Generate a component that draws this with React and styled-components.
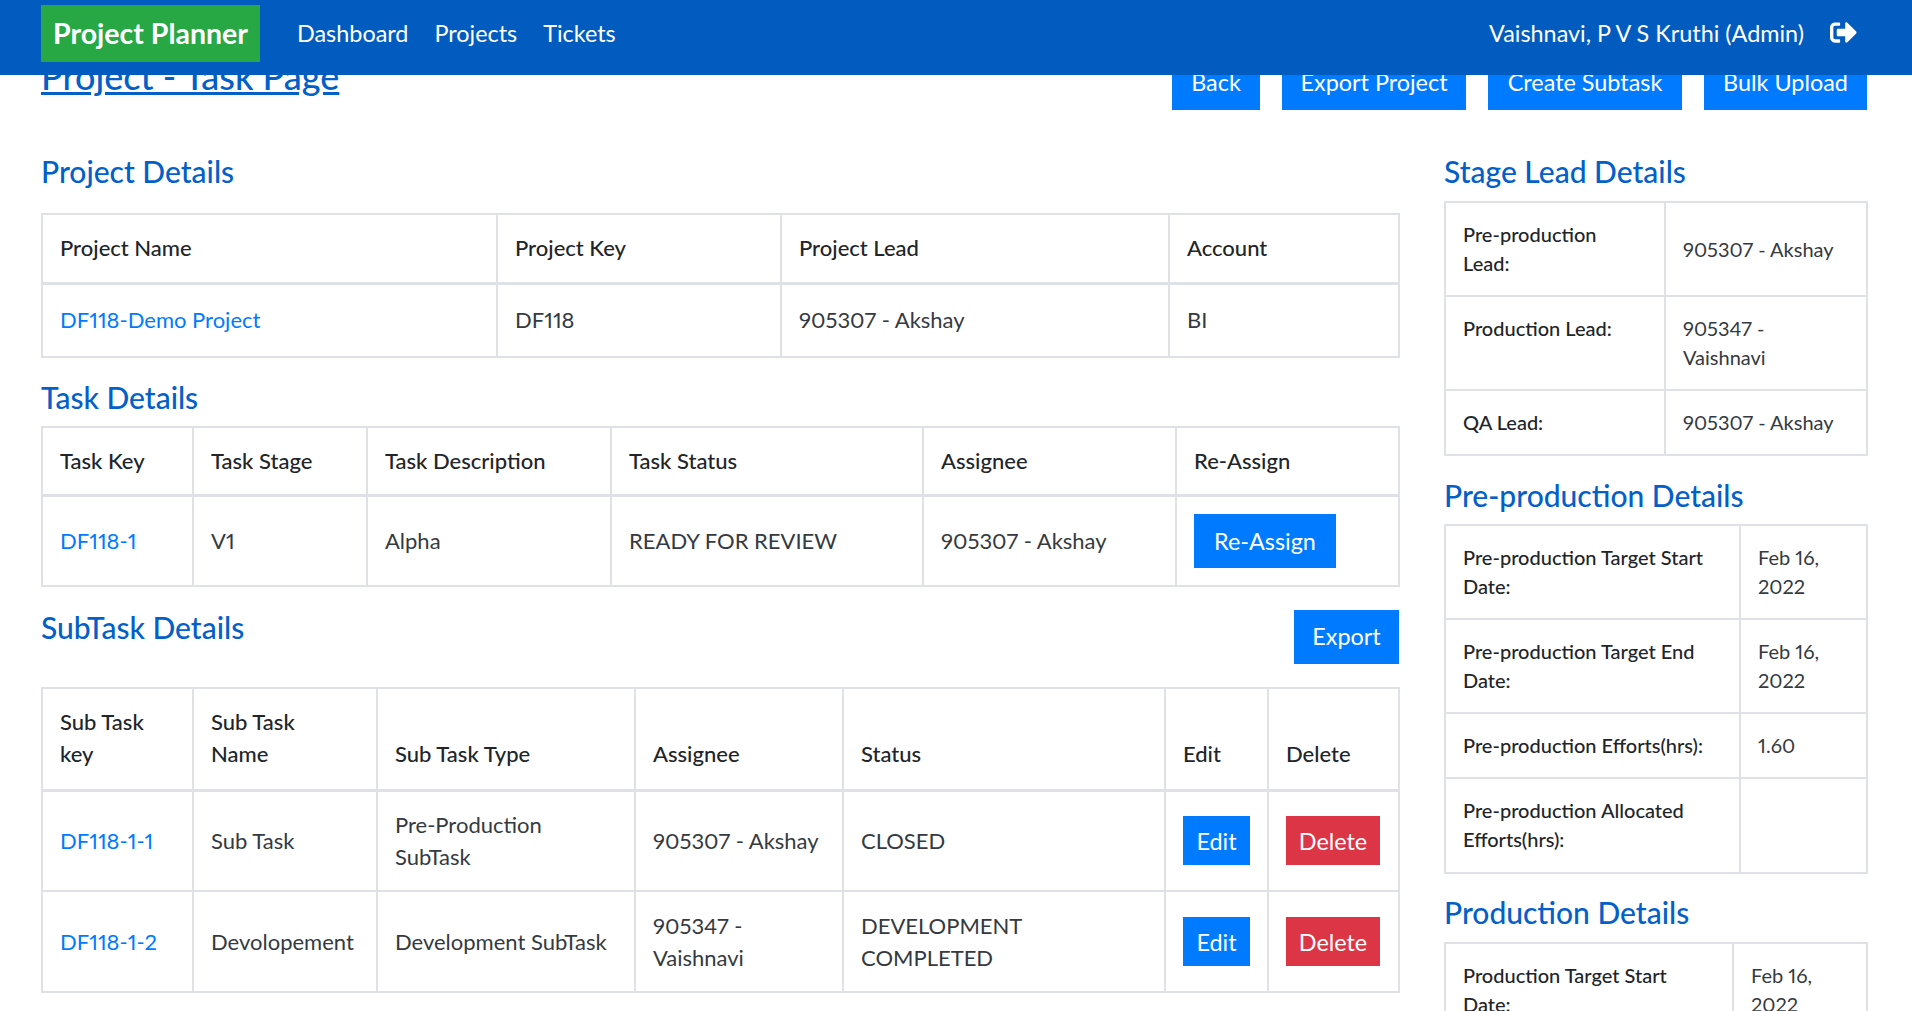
import React from 'react';
import styled, { createGlobalStyle, css } from 'styled-components';
import { FaSignOutAlt } from 'react-icons/fa';

const GlobalStyle = createGlobalStyle`
  html, body {
    margin: 0;
    height: 100%;
    overflow: hidden;
    background: #fff;
  }
  body {
    font-family: Lato, "Open Sans", sans-serif;
    font-variant-numeric: proportional-nums;
    color: #212529;
  }
  * {
    box-sizing: border-box;
  }
`;

const App = () => {
  return (
    <>
      <GlobalStyle />
      <Navbar>
        <Brand>Project Planner</Brand>
        <NavLinks>
          <NavLink>Dashboard</NavLink>
          <NavLink>Projects</NavLink>
          <NavLink>Tickets</NavLink>
        </NavLinks>
        <UserBox>
          <span>Vaishnavi, P V S Kruthi (Admin)</span>
          <FaSignOutAlt size={27} />
        </UserBox>
      </Navbar>

      <Page>
        <TitleRow>
          <PageTitle>Project - Task Page</PageTitle>
          <ActionRow>
            <ActionButton $w={88}>Back</ActionButton>
            <ActionButton $w={184}>Export Project</ActionButton>
            <ActionButton $w={194}>Create Subtask</ActionButton>
            <ActionButton $w={163}>Bulk Upload</ActionButton>
          </ActionRow>
        </TitleRow>

        <Columns>
          <Main>
            <Heading $after={25}>Project Details</Heading>
            <MainTable>
              <colgroup>
                <col width="455" /><col width="284" /><col width="388" /><col width="230" />
              </colgroup>
              <thead>
                <HeadRow $h={69}>
                  <HeadCell>Project Name</HeadCell>
                  <HeadCell>Project Key</HeadCell>
                  <HeadCell>Project Lead</HeadCell>
                  <HeadCell>Account</HeadCell>
                </HeadRow>
              </thead>
              <tbody>
                <Row $h={74}>
                  <Cell><TableLink>DF118-Demo Project</TableLink></Cell>
                  <Cell>DF118</Cell>
                  <Cell>905307 - Akshay</Cell>
                  <Cell>BI</Cell>
                </Row>
              </tbody>
            </MainTable>

            <Heading $before={22} $after={12}>Task Details</Heading>
            <MainTable>
              <colgroup>
                <col width="151" /><col width="174" /><col width="244" /><col width="312" /><col width="253" /><col width="223" />
              </colgroup>
              <thead>
                <HeadRow $h={68}>
                  <HeadCell>Task Key</HeadCell>
                  <HeadCell>Task Stage</HeadCell>
                  <HeadCell>Task Description</HeadCell>
                  <HeadCell>Task Status</HeadCell>
                  <HeadCell>Assignee</HeadCell>
                  <HeadCell>Re-Assign</HeadCell>
                </HeadRow>
              </thead>
              <tbody>
                <Row $h={91}>
                  <Cell><TableLink>DF118-1</TableLink></Cell>
                  <Cell>V1</Cell>
                  <Cell>Alpha</Cell>
                  <Cell>READY FOR REVIEW</Cell>
                  <Cell>905307 - Akshay</Cell>
                  <Cell><RowButton $w={142} $h={54}>Re-Assign</RowButton></Cell>
                </Row>
              </tbody>
            </MainTable>

            <SectionHead>
              <Heading>SubTask Details</Heading>
              <ActionButton $w={105}>Export</ActionButton>
            </SectionHead>
            <MainTable>
              <colgroup>
                <col width="151" /><col width="184" /><col width="258" /><col width="208" /><col width="322" /><col width="103" /><col width="131" />
              </colgroup>
              <thead>
                <HeadRow $h={102} $tall>
                  <HeadCell>Sub Task key</HeadCell>
                  <HeadCell>Sub Task<br />Name</HeadCell>
                  <HeadCell>Sub Task Type</HeadCell>
                  <HeadCell>Assignee</HeadCell>
                  <HeadCell>Status</HeadCell>
                  <HeadCell>Edit</HeadCell>
                  <HeadCell>Delete</HeadCell>
                </HeadRow>
              </thead>
              <tbody>
                <Row $h={101}>
                  <Cell><TableLink>DF118-1-1</TableLink></Cell>
                  <Cell>Sub Task</Cell>
                  <Cell>Pre-Production SubTask</Cell>
                  <Cell>905307 - Akshay</Cell>
                  <Cell>CLOSED</Cell>
                  <Cell><RowButton $w={67} $h={49}>Edit</RowButton></Cell>
                  <Cell><RowButton $w={94} $h={49} $danger>Delete</RowButton></Cell>
                </Row>
                <Row $h={101}>
                  <Cell><TableLink>DF118-1-2</TableLink></Cell>
                  <Cell>Devolopement</Cell>
                  <Cell>Development SubTask</Cell>
                  <Cell>905347 - Vaishnavi</Cell>
                  <Cell>DEVELOPMENT COMPLETED</Cell>
                  <Cell><RowButton $w={67} $h={49}>Edit</RowButton></Cell>
                  <Cell><RowButton $w={94} $h={49} $danger>Delete</RowButton></Cell>
                </Row>
              </tbody>
            </MainTable>
          </Main>

          <Side>
            <Heading $after={13}>Stage Lead Details</Heading>
            <SideTable>
              <colgroup><col width="220" /><col width="202" /></colgroup>
              <tbody>
                <Row $h={94}>
                  <SideLabel>Pre-production Lead:</SideLabel>
                  <SideCell>905307 - Akshay</SideCell>
                </Row>
                <Row $h={94}>
                  <SideLabel>Production Lead:</SideLabel>
                  <SideCell>905347 - Vaishnavi</SideCell>
                </Row>
                <Row $h={65}>
                  <SideLabel>QA Lead:</SideLabel>
                  <SideCell>905307 - Akshay</SideCell>
                </Row>
              </tbody>
            </SideTable>

            <Heading $before={22} $after={12}>Pre-production Details</Heading>
            <SideTable>
              <colgroup><col width="295" /><col width="127" /></colgroup>
              <tbody>
                <Row $h={94}>
                  <SideLabel>Pre-production Target Start Date:</SideLabel>
                  <SideCell>Feb 16, 2022</SideCell>
                </Row>
                <Row $h={94}>
                  <SideLabel>Pre-production Target End Date:</SideLabel>
                  <SideCell>Feb 16, 2022</SideCell>
                </Row>
                <Row $h={65}>
                  <SideLabel>Pre-production Efforts(hrs):</SideLabel>
                  <SideCell>1.60</SideCell>
                </Row>
                <Row $h={95}>
                  <SideLabel>Pre-production Allocated Efforts(hrs):</SideLabel>
                  <SideCell />
                </Row>
              </tbody>
            </SideTable>

            <Heading $before={21} $after={13}>Production Details</Heading>
            <SideTable>
              <colgroup><col width="288" /><col width="134" /></colgroup>
              <tbody>
                <Row $h={94}>
                  <SideLabel>Production Target Start Date:</SideLabel>
                  <SideCell>Feb 16, 2022</SideCell>
                </Row>
              </tbody>
            </SideTable>
          </Side>
        </Columns>
      </Page>
    </>
  );
};

export default App;

const Navbar = styled.nav`
  position: fixed;
  top: 0;
  left: 0;
  right: 0;
  z-index: 10;
  height: 75px;
  padding: 0 55px 0 41px;
  display: flex;
  align-items: center;
  background: #025cbf;
  color: #fff;
`;

const Brand = styled.a`
  width: 219px;
  height: 57px;
  margin-top: -8px;
  padding-bottom: 2px;
  display: flex;
  align-items: center;
  justify-content: center;
  background: #28a745;
  font-size: 28.5px;
  font-weight: 700;
  white-space: nowrap;
`;

const NavLinks = styled.div`
  margin-left: 37px;
  margin-top: -10px;
  display: flex;
  gap: 26px;
`;

const NavLink = styled.a`
  font-size: 23.4px;
`;

const UserBox = styled.div`
  margin-left: auto;
  margin-top: -10px;
  display: flex;
  align-items: center;
  gap: 26px;
  font-size: 23.4px;
`;

const Page = styled.main`
  padding: 56px 45px 0 41px;
`;

const TitleRow = styled.div`
  display: flex;
  justify-content: space-between;
  align-items: flex-end;
`;

const PageTitle = styled.h1`
  margin: 0 0 14px;
  font-size: 36px;
  line-height: 40px;
  font-weight: 500;
  color: #0260c8;
  text-decoration: underline;
`;

const ActionRow = styled.div`
  display: flex;
  gap: 22px;
`;

const ActionButton = styled.button`
  width: ${(p) => p.$w}px;
  height: 54px;
  padding: 0 0 2px;
  border: 0;
  background: #007bff;
  color: #fff;
  font-family: inherit;
  font-size: 23.4px;
`;

const Columns = styled.div`
  margin-top: 44px;
  display: grid;
  grid-template-columns: 1358px 422px;
  column-gap: 45px;
  align-items: start;
`;

const Main = styled.section``;

const Side = styled.aside``;

const Heading = styled.h2`
  margin: ${(p) => p.$before || 0}px 0 ${(p) => p.$after || 0}px;
  font-size: 30px;
  line-height: 34px;
  font-weight: 500;
  color: #0260c8;
`;

const SectionHead = styled.div`
  margin: 23px 0 23px;
  display: flex;
  justify-content: space-between;
  align-items: flex-start;
`;

const MainTable = styled.table`
  width: calc(100% - 1px);
  table-layout: fixed;
  border-collapse: collapse;
  font-size: 22px;
  line-height: 32px;
`;

const SideTable = styled(MainTable)`
  width: 100%;
  font-size: 20px;
  line-height: 29px;
`;

const Row = styled.tr`
  height: ${(p) => p.$h}px;
`;

const HeadCell = styled.th`
  padding: 16px 17px;
  border: 2px solid #dee2e6;
  border-bottom-width: 3px;
  text-align: left;
  vertical-align: middle;
  font-weight: 500;
`;

const HeadRow = styled(Row)`
  ${(p) =>
    p.$tall &&
    css`
      & > th {
        padding-bottom: 19px;
        vertical-align: bottom;
      }
    `}
`;

const Cell = styled.td`
  padding: 15px 17px;
  border: 2px solid #dee2e6;
  vertical-align: middle;
  color: #343a40;
`;

const SideLabel = styled.th`
  padding: 17px;
  border: 2px solid #dee2e6;
  text-align: left;
  vertical-align: top;
  font-weight: 500;
`;

const SideCell = styled(Cell)`
  padding: 17px;
`;

const TableLink = styled.a`
  color: #007bff;
`;

const RowButton = styled.button`
  display: block;
  width: ${(p) => p.$w}px;
  height: ${(p) => p.$h}px;
  padding: 0;
  border: 0;
  background: ${(p) => (p.$danger ? '#dc3545' : '#007bff')};
  color: #fff;
  font-family: inherit;
  font-size: 23.4px;
`;
